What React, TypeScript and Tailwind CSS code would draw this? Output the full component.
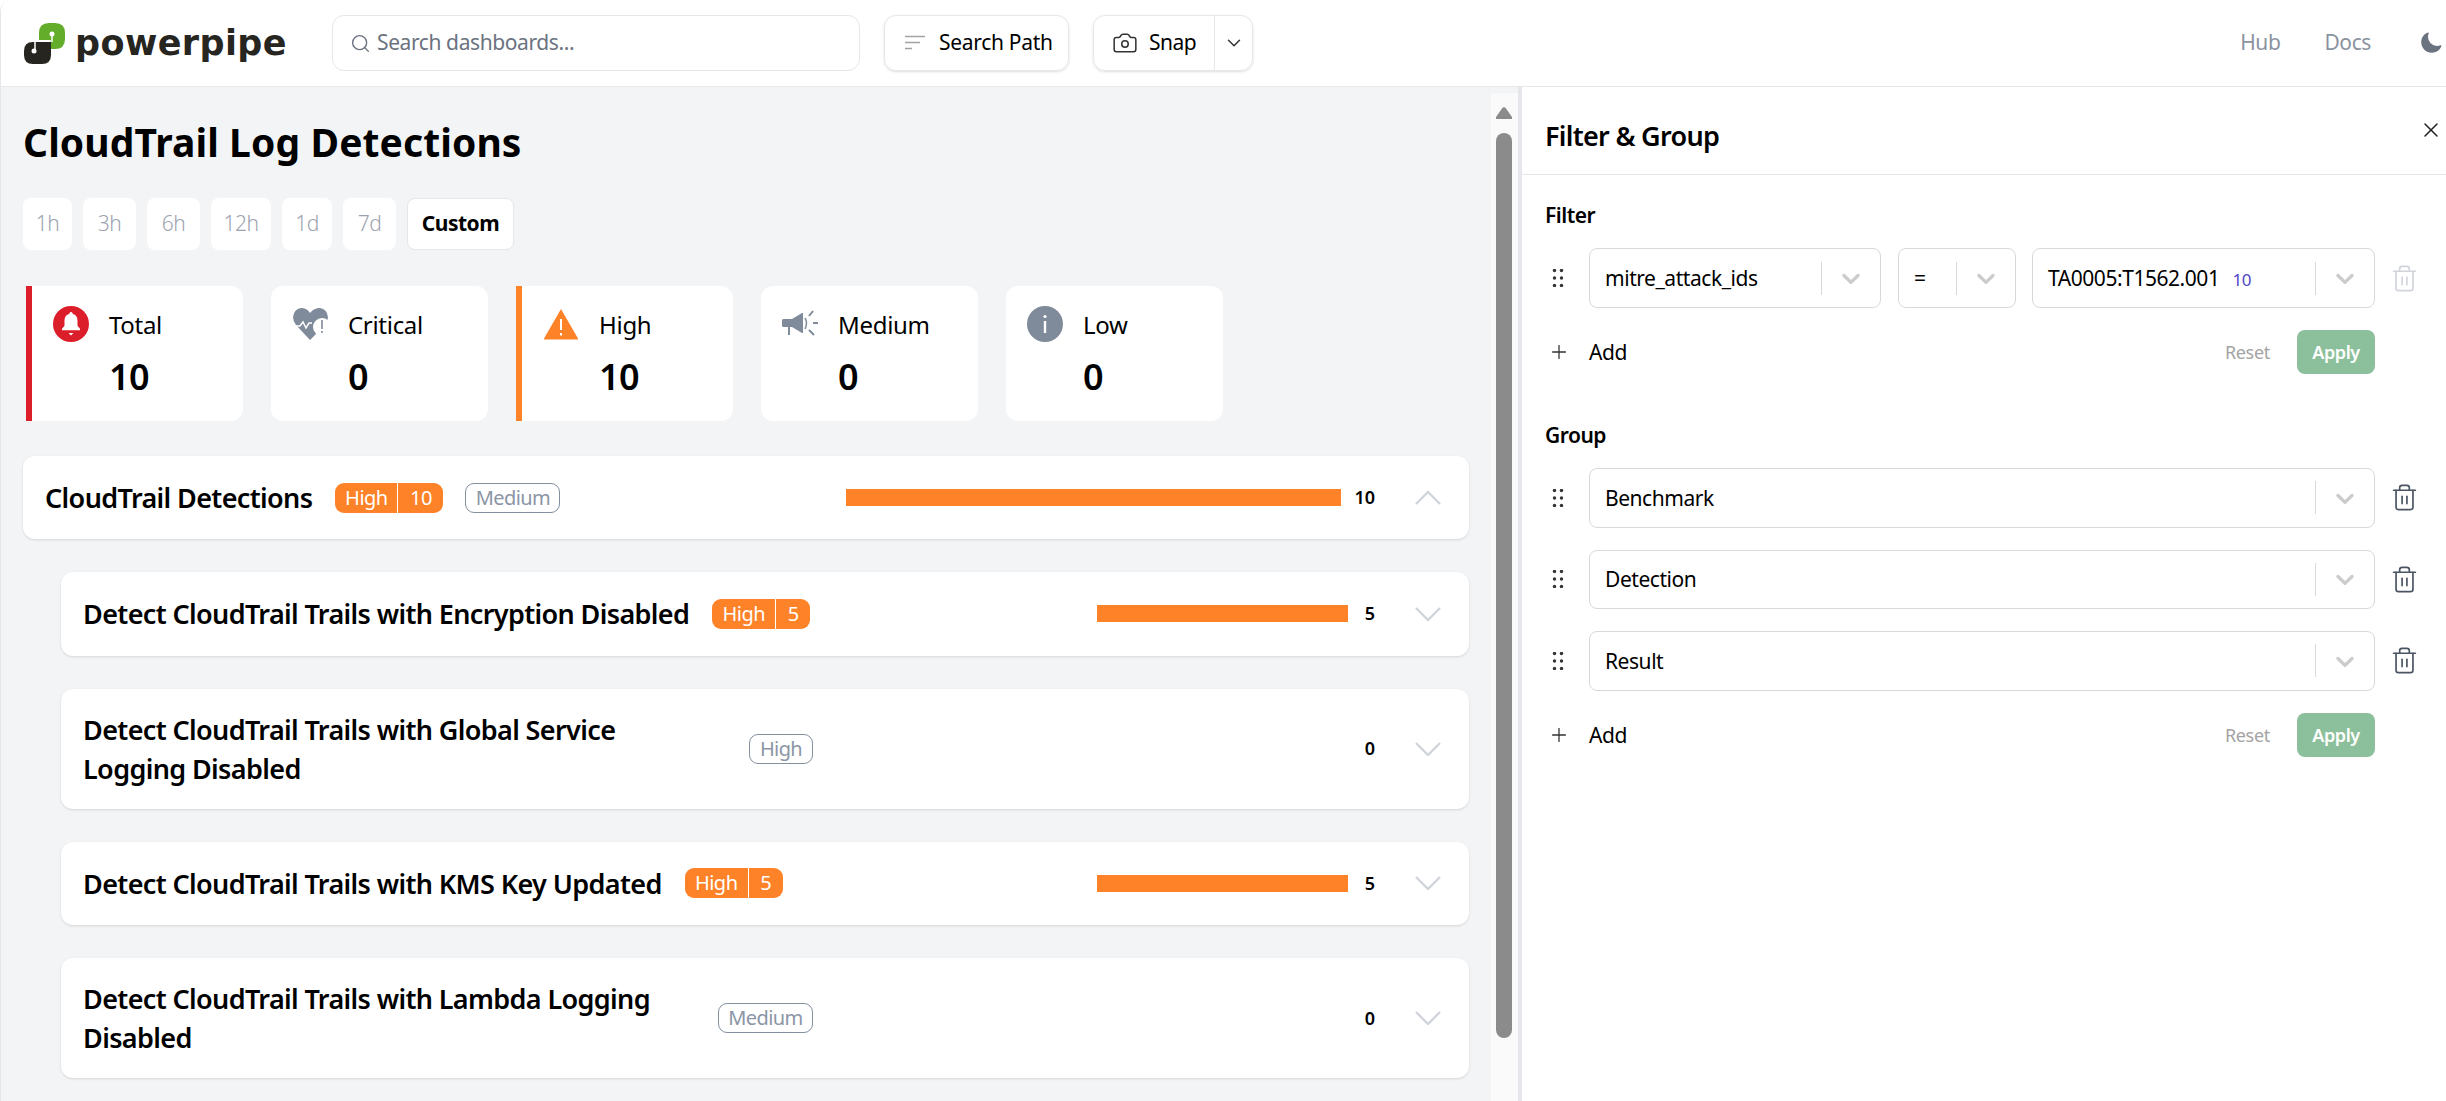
import { Camera, ChevronDown, Plus, Search, Trash2, X } from "lucide-react";

const font = "font-['Noto_Sans',sans-serif]";

function Logo() {
  return (
    <div className="flex items-center">
      <svg width="41" height="41" viewBox="0 0 41 41">
        <path d="M15 17V10Q15 0 25 0H31Q41 0 41 10V16Q41 26 31 26H26V17Z" fill="#64ad2b" />
        <path d="M11 19H27V32Q27 41 18 41H9Q0 41 0 32V28Q0 19 9 19Z" fill="#27251f" />
        <path d="M11 18H29" stroke="#fff" strokeWidth="1.5" />
        <path d="M28 17V12" stroke="#fff" strokeWidth="1.5" />
        <circle cx="28" cy="11" r="2.5" fill="#fff" />
        <path d="M11 27V19" stroke="#fff" strokeWidth="1.5" />
        <circle cx="10" cy="28" r="2.5" fill="#fff" />
      </svg>
      <span className="ml-[10px] font-['DejaVu_Sans',sans-serif] text-[35px] leading-[40px] font-bold tracking-[0.4px] text-[#27251f]">
        powerpipe
      </span>
    </div>
  );
}

function Header() {
  return (
    <header className="flex h-[87px] shrink-0 items-center border-b border-[#e5e7eb] bg-white pl-[23px]">
      <div className="w-[308px]">
        <Logo />
      </div>
      <div className="flex h-[56px] w-[528px] items-center rounded-xl border border-[#e5e7eb] pl-[17px] text-[21px] text-[#6b7280]">
        <Search size={21} strokeWidth={1.6} />
        <span className="ml-[6px] tracking-[-0.4px]">Search dashboards...</span>
      </div>
      <div className="ml-[24px] flex h-[56px] w-[185px] items-center rounded-xl border border-[#e5e7eb] pl-[20px] text-[21px] text-black shadow-sm">
        <svg width="21" height="16" viewBox="0 0 21 16" className="text-[#a3a3a3]" stroke="currentColor" strokeWidth="1.5">
          <path d="M0 1.5H20M0 7.5H15M0 13.5H7" />
        </svg>
        <span className="ml-[13px] tracking-[-0.3px]">Search Path</span>
      </div>
      <div className="ml-[24px] flex h-[56px] w-[160px] items-center rounded-xl border border-[#e5e7eb] text-[21px] text-black shadow-sm">
        <div className="flex h-full w-[121px] items-center border-r border-[#e5e7eb] pl-[18px]">
          <Camera size={26} strokeWidth={1.4} className="text-[#333]" />
          <span className="ml-[11px] tracking-[-0.5px]">Snap</span>
        </div>
        <ChevronDown size={22} strokeWidth={1.6} className="ml-[8px] text-[#333]" />
      </div>
      <div className="ml-auto flex items-center pr-[3px] text-[21px] text-[#8b93a0]">
        <span className="tracking-[-0.4px]">Hub</span>
        <span className="ml-[44px] tracking-[-0.4px]">Docs</span>
        <svg width="24" height="24" viewBox="0 0 24 24" fill="#6b7280" className="ml-[48px]">
          <path d="M9.528 1.718a.75.75 0 01.162.819A8.97 8.97 0 009 6a9 9 0 009 9 8.97 8.97 0 003.463-.69.75.75 0 01.981.98 10.503 10.503 0 01-9.694 6.46c-5.799 0-10.5-4.701-10.5-10.5 0-4.368 2.667-8.112 6.46-9.694a.75.75 0 01.818.162z" />
        </svg>
      </div>
    </header>
  );
}

function BellIcon() {
  return (
    <svg width="36" height="36" viewBox="0 0 36 36">
      <circle cx="18" cy="18" r="18" fill="#dc1e2a" />
      <path d="M18 6a1.6 1.6 0 011.6 1.7c3.4.8 4.9 3.6 4.9 6.8v5.2l2.5 3.1v1.4H9v-1.4l2.5-3.1v-5.2c0-3.2 1.5-6 4.9-6.8A1.6 1.6 0 0118 6z" fill="#fff" />
      <path d="M15.5 27h5l-2.5 2.5z" fill="#fff" />
    </svg>
  );
}

function HeartIcon() {
  return (
    <svg width="35" height="32" viewBox="0 0 35 32">
      <path d="M17 32L3 17Q0 13 0 9Q1 1 8 0Q14 0 17 5Q21 0 27 0Q34 1 35 9Q35 13 32 17Z" fill="#7f8a9a" />
      <path d="M1 18H7L10 14L13 20L16 15H19" stroke="#fff" strokeWidth="1.5" fill="none" />
      <circle cx="29" cy="19" r="9" fill="#fff" />
      <path d="M29 12V21M29 23V25" stroke="#7f8a9a" strokeWidth="1.6" />
    </svg>
  );
}

function WarnIcon() {
  return (
    <svg width="36" height="32" viewBox="0 0 36 32">
      <path d="M18 1L35 30.5Q35.5 31.5 34.5 31.5H1.5Q.5 31.5 1 30.5Z" fill="#fe8228" />
      <path d="M18 11V22M18 25V27.5" stroke="#fff" strokeWidth="2" />
    </svg>
  );
}

function MegaphoneIcon() {
  return (
    <svg width="36" height="28" viewBox="0 0 36 28">
      <path d="M0 10Q0 9 2 9H10L20 3H21V23H20L10 17H8V25H6V17H2Q0 17 0 16Z" fill="#7f8a9a" />
      <path d="M23 8Q26 13 23 19" stroke="#7f8a9a" strokeWidth="1.5" fill="none" />
      <path d="M31 13H36M27 6L31 1M27 20L32 25" stroke="#7f8a9a" strokeWidth="2" />
    </svg>
  );
}

function InfoIcon() {
  return (
    <svg width="36" height="36" viewBox="0 0 36 36">
      <circle cx="18" cy="18" r="18" fill="#7f8a9a" />
      <path d="M18 15V27" stroke="#fff" strokeWidth="2.4" />
      <circle cx="18" cy="10.5" r="1.6" fill="#fff" />
    </svg>
  );
}

function StatCard({ icon, label, value, accent }: { icon: React.ReactNode; label: string; value: string; accent?: string }) {
  return (
    <div className={`flex h-[135px] w-[217px] bg-white pt-[20px] pl-[21px] ${accent ?? "rounded-xl"}`}>
      <div className="flex h-[36px] w-[36px] shrink-0 items-center justify-center">{icon}</div>
      <div className="ml-[20px]">
        <div className="pt-[1px] text-[24px] leading-[36px] tracking-[-0.3px] text-black">{label}</div>
        <div className="mt-[7px] text-[36px] leading-[54px] font-semibold tracking-[-0.5px] text-black">{value}</div>
      </div>
    </div>
  );
}

function HighBadge({ count, left, right }: { count: string; left: string; right: string }) {
  return (
    <div className="flex h-[30px] shrink-0 items-center rounded-[9px] bg-[#fe8228] text-[20px] leading-[30px] tracking-[-0.5px] text-white">
      <span className={`h-full border-r border-white text-center ${left}`}>High</span>
      <span className={`text-center ${right}`}>{count}</span>
    </div>
  );
}

function OutlineBadge({ text, width }: { text: string; width: string }) {
  return (
    <div className={`flex h-[30px] shrink-0 items-center justify-center rounded-[9px] border border-[#8490a0] text-[20px] tracking-[-0.6px] text-[#8b95a5] ${width}`}>
      {text}
    </div>
  );
}

function RowEnd({ count, bar, countGap, up }: { count: string; bar?: string; countGap: string; up?: boolean }) {
  return (
    <div className="ml-auto flex items-center">
      {bar && <div className={`h-[17px] bg-[#fe8228] ${bar}`} />}
      <span className={`text-[18px] font-semibold text-black ${countGap}`}>{count}</span>
      <svg width="26" height="14" viewBox="0 0 26 14" fill="none" stroke="#d1d5db" strokeWidth="2.4" className={`mr-[28px] ml-[40px] ${up ? "rotate-180" : ""}`}>
        <path d="M1 1L13 13L25 1" />
      </svg>
    </div>
  );
}

function DetectionRow({ height, children }: { height: string; children: React.ReactNode }) {
  return <div className={`flex items-center rounded-xl bg-white pl-[22px] shadow-sm ${height}`}>{children}</div>;
}

function Title({ text, width }: { text: string; width?: string }) {
  return <div className={`text-[27px] leading-[39px] font-semibold tracking-[-0.63px] text-black ${width ?? ""}`}>{text}</div>;
}

function Range({ label, width }: { label: string; width: string }) {
  return (
    <div className={`flex h-[52px] items-center justify-center rounded-lg bg-white text-[21px] font-light tracking-[-0.5px] text-[#9ca3af] ${width}`}>
      {label}
    </div>
  );
}

function Dashboard() {
  return (
    <main className="min-w-0 flex-1 bg-[#f3f4f6] pr-[22px] pl-[22px]">
      <h1 className="pt-[28px] pb-[2px] text-[39px] leading-[54px] font-bold tracking-[0.1px] text-black">CloudTrail Log Detections</h1>
      <div className="mt-[27px] flex gap-[11px]">
        <Range label="1h" width="w-[49px]" />
        <Range label="3h" width="w-[53px]" />
        <Range label="6h" width="w-[53px]" />
        <Range label="12h" width="w-[60px]" />
        <Range label="1d" width="w-[50px]" />
        <Range label="7d" width="w-[53px]" />
        <div className="flex h-[52px] w-[107px] items-center justify-center rounded-lg border border-[#e5e7eb] bg-white text-[21px] font-bold tracking-[-0.5px] text-black">
          Custom
        </div>
      </div>
      <div className="mt-[36px] ml-[3px] flex gap-[28px]">
        <StatCard icon={<BellIcon />} label="Total" value="10" accent="rounded-r-xl border-l-[6px] border-[#dc1e2a]" />
        <StatCard icon={<HeartIcon />} label="Critical" value="0" />
        <StatCard icon={<WarnIcon />} label="High" value="10" accent="rounded-r-xl border-l-[6px] border-[#fe8228]" />
        <StatCard icon={<MegaphoneIcon />} label="Medium" value="0" />
        <StatCard icon={<InfoIcon />} label="Low" value="0" />
      </div>
      <div className="mt-[35px]">
        <DetectionRow height="h-[83px]">
          <Title text="CloudTrail Detections" />
          <div className="ml-[23px]">
            <HighBadge count="10" left="w-[63px]" right="w-[45px]" />
          </div>
          <div className="ml-[22px]">
            <OutlineBadge text="Medium" width="w-[95px]" />
          </div>
          <RowEnd count="10" bar="w-[495px]" countGap="ml-[13px]" up />
        </DetectionRow>
      </div>
      <div className="mt-[33px] ml-[38px] flex flex-col gap-[33px]">
        <DetectionRow height="h-[83.5px]">
          <Title text="Detect CloudTrail Trails with Encryption Disabled" />
          <div className="ml-[23px]">
            <HighBadge count="5" left="w-[64px]" right="w-[34px]" />
          </div>
          <RowEnd count="5" bar="w-[251px]" countGap="ml-[17px]" />
        </DetectionRow>
        <DetectionRow height="h-[120px]">
          <Title text="Detect CloudTrail Trails with Global Service Logging Disabled" width="w-[610px]" />
          <div className="ml-[56px]">
            <OutlineBadge text="High" width="w-[64px]" />
          </div>
          <RowEnd count="0" countGap="" />
        </DetectionRow>
        <DetectionRow height="h-[83.5px]">
          <Title text="Detect CloudTrail Trails with KMS Key Updated" />
          <div className="ml-[23px]">
            <HighBadge count="5" left="w-[64px]" right="w-[34px]" />
          </div>
          <RowEnd count="5" bar="w-[251px]" countGap="ml-[17px]" />
        </DetectionRow>
        <DetectionRow height="h-[120px]">
          <Title text="Detect CloudTrail Trails with Lambda Logging Disabled" width="w-[610px]" />
          <div className="ml-[25px]">
            <OutlineBadge text="Medium" width="w-[95px]" />
          </div>
          <RowEnd count="0" countGap="" />
        </DetectionRow>
      </div>
    </main>
  );
}

function Scrollbar() {
  return (
    <div className="mt-[6px] w-[27px] shrink-0 bg-[#fafafa] pl-[5px]">
      <svg width="16" height="12" viewBox="0 0 16 12" fill="#8b8b8b" className="mt-[14px]">
        <path d="M8 0Q9 0 10 1.5L16 10Q16.5 12 15 12H1Q-.5 12 0 10L6 1.5Q7 0 8 0Z" />
      </svg>
      <div className="mt-[14px] h-[905px] w-[16px] rounded-full bg-[#8b8b8b]" />
    </div>
  );
}

function DragDots() {
  return (
    <svg width="44" height="18" viewBox="0 0 44 18" fill="#333" className="shrink-0">
      <circle cx="9.5" cy="1.5" r="1.7" />
      <circle cx="16.5" cy="1.5" r="1.7" />
      <circle cx="9.5" cy="9" r="1.7" />
      <circle cx="16.5" cy="9" r="1.7" />
      <circle cx="9.5" cy="16.5" r="1.7" />
      <circle cx="16.5" cy="16.5" r="1.7" />
    </svg>
  );
}

function SelectBox({ width, height, children }: { width: string; height: string; children: React.ReactNode }) {
  return (
    <div className={`flex items-center rounded-lg border-[1.5px] border-[#d9d9d9] bg-white pl-[15px] text-[21px] tracking-[-0.45px] text-black ${width} ${height}`}>
      <div className="min-w-0 flex-1 pt-[1px] whitespace-nowrap">{children}</div>
      <div className="h-[33px] w-px bg-[#d9d9d9]" />
      <svg width="30" height="30" viewBox="0 0 20 20" fill="#cccccc" className="mx-[14px]">
        <path d="M4.516 7.548c0.436-0.446 1.043-0.481 1.576 0l3.908 3.747 3.908-3.747c0.533-0.481 1.141-0.446 1.574 0 0.436 0.445 0.408 1.197 0 1.615-0.406 0.418-4.695 4.502-4.695 4.502-0.217 0.223-0.502 0.335-0.787 0.335s-0.57-0.112-0.789-0.335c0 0-4.287-4.084-4.695-4.502s-0.436-1.17 0-1.615z" />
      </svg>
    </div>
  );
}

function AddRow() {
  return (
    <div className="flex h-[44px] w-[830px] items-center text-[21px] text-black">
      <Plus size={22} strokeWidth={1.4} className="ml-[3px] text-[#333]" />
      <span className="ml-[19px] pt-[1px] tracking-[-0.4px]">Add</span>
      <span className="ml-auto text-[18px] tracking-[-0.3px] text-[#a3a3a3]">Reset</span>
      <div className="ml-[27px] flex h-[44px] w-[78px] items-center justify-center rounded-lg bg-[#8cbf9b] text-[18px] font-semibold tracking-[-0.4px] text-white">
        Apply
      </div>
    </div>
  );
}

function GroupRow({ label }: { label: string }) {
  return (
    <div className="flex items-center">
      <DragDots />
      <SelectBox width="w-[786px]" height="h-[59.5px]">
        {label}
      </SelectBox>
      <Trash2 size={29} strokeWidth={1.4} className="ml-[15px] text-[#4b5563]" />
    </div>
  );
}

function FilterPanel() {
  return (
    <aside className="w-[928px] shrink-0 border-l-4 border-[#e5e7eb] bg-white">
      <div className="flex h-[88px] items-start justify-between border-b border-[#e5e7eb] pt-[29px] pr-[3px] pl-[23px]">
        <h2 className="text-[27px] leading-[40px] font-semibold tracking-[-0.7px] text-black">Filter &amp; Group</h2>
        <X size={24} strokeWidth={1.5} className="mt-[2px] text-[#222]" />
      </div>
      <div className="pt-[22px] pl-[23px]">
        <div className="text-[21px] leading-[36px] font-semibold tracking-[-0.5px] text-black">Filter</div>
        <div className="mt-[15px] flex items-center">
          <DragDots />
          <SelectBox width="w-[292px]" height="h-[60px]">mitre_attack_ids</SelectBox>
          <div className="ml-[17px]">
            <SelectBox width="w-[118px]" height="h-[60px]">=</SelectBox>
          </div>
          <div className="ml-[16px]">
            <SelectBox width="w-[343px]" height="h-[60px]">
              TA0005:T1562.001
              <span className="ml-[13px] text-[17px] text-[#4f46c8]">10</span>
            </SelectBox>
          </div>
          <Trash2 size={29} strokeWidth={1.4} className="ml-[15px] text-[#d1d5db]" />
        </div>
        <div className="mt-[22px]">
          <AddRow />
        </div>
        <div className="mt-[43px] text-[21px] leading-[36px] font-semibold tracking-[-0.5px] text-black">Group</div>
        <div className="mt-[15px] flex flex-col gap-[22px]">
          <GroupRow label="Benchmark" />
          <GroupRow label="Detection" />
          <GroupRow label="Result" />
        </div>
        <div className="mt-[22.5px]">
          <AddRow />
        </div>
      </div>
    </aside>
  );
}

export default function App() {
  return (
    <div className={`flex h-[1101px] w-[2446px] flex-col overflow-hidden rounded-tl-xl border-l border-[#e5e7eb] bg-white ${font}`}>
      <Header />
      <div className="flex min-h-0 flex-1">
        <Dashboard />
        <div className="flex bg-[#f3f4f6]">
          <Scrollbar />
        </div>
        <FilterPanel />
      </div>
    </div>
  );
}
